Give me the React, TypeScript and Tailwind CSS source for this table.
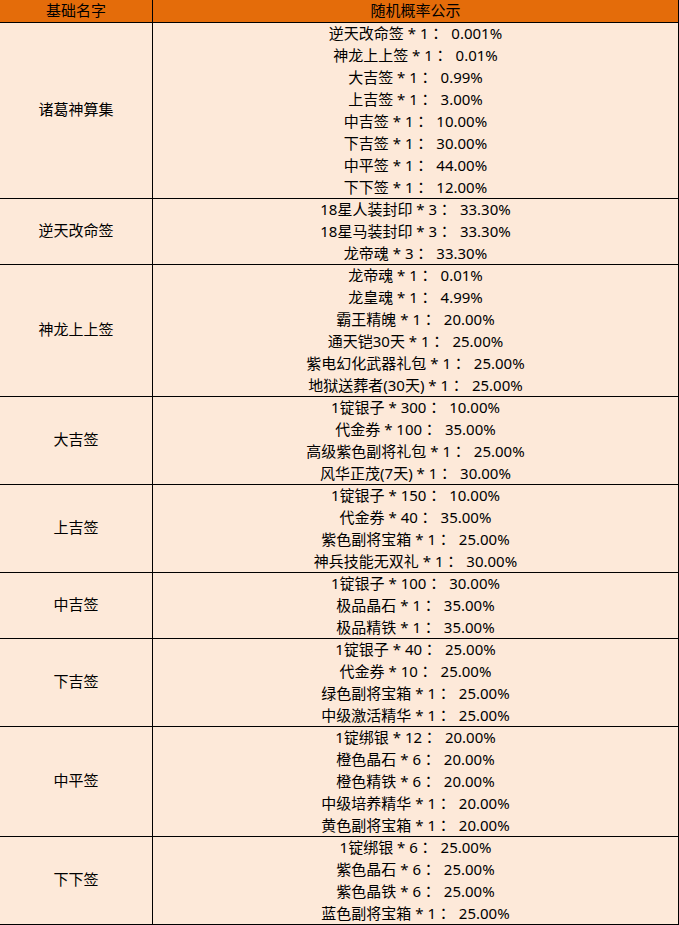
const groups: { name: string; items: string[] }[] = [
  {
    name: "诸葛神算集",
    items: [
      "逆天改命签 * 1： 0.001%",
      "神龙上上签 * 1： 0.01%",
      "大吉签 * 1： 0.99%",
      "上吉签 * 1： 3.00%",
      "中吉签 * 1： 10.00%",
      "下吉签 * 1： 30.00%",
      "中平签 * 1： 44.00%",
      "下下签 * 1： 12.00%",
    ],
  },
  {
    name: "逆天改命签",
    items: ["18星人装封印 * 3： 33.30%", "18星马装封印 * 3： 33.30%", "龙帝魂 * 3： 33.30%"],
  },
  {
    name: "神龙上上签",
    items: [
      "龙帝魂 * 1： 0.01%",
      "龙皇魂 * 1： 4.99%",
      "霸王精魄 * 1： 20.00%",
      "通天铠30天 * 1： 25.00%",
      "紫电幻化武器礼包 * 1： 25.00%",
      "地狱送葬者(30天) * 1： 25.00%",
    ],
  },
  {
    name: "大吉签",
    items: [
      "1锭银子 * 300： 10.00%",
      "代金券 * 100： 35.00%",
      "高级紫色副将礼包 * 1： 25.00%",
      "风华正茂(7天) * 1： 30.00%",
    ],
  },
  {
    name: "上吉签",
    items: [
      "1锭银子 * 150： 10.00%",
      "代金券 * 40： 35.00%",
      "紫色副将宝箱 * 1： 25.00%",
      "神兵技能无双礼 * 1： 30.00%",
    ],
  },
  {
    name: "中吉签",
    items: ["1锭银子 * 100： 30.00%", "极品晶石 * 1： 35.00%", "极品精铁 * 1： 35.00%"],
  },
  {
    name: "下吉签",
    items: [
      "1锭银子 * 40： 25.00%",
      "代金券 * 10： 25.00%",
      "绿色副将宝箱 * 1： 25.00%",
      "中级激活精华 * 1： 25.00%",
    ],
  },
  {
    name: "中平签",
    items: [
      "1锭绑银 * 12： 20.00%",
      "橙色晶石 * 6： 20.00%",
      "橙色精铁 * 6： 20.00%",
      "中级培养精华 * 1： 20.00%",
      "黄色副将宝箱 * 1： 20.00%",
    ],
  },
  {
    name: "下下签",
    items: [
      "1锭绑银 * 6： 25.00%",
      "紫色晶石 * 6： 25.00%",
      "紫色晶铁 * 6： 25.00%",
      "蓝色副将宝箱 * 1： 25.00%",
    ],
  },
];

// the full-width colon sits centred in the reference, as in the JP cut of Noto
const Line = ({ text }: { text: string }) => {
  const [left, right] = text.split("：");
  return (
    <div className="h-[22px] shrink-0 whitespace-pre text-center leading-[20px]">
      {left}
      <span className="font-['Noto_Sans_CJK_JP']">：</span>
      {" " + right}
    </div>
  );
};

export default function App() {
  return (
    <div
      className="w-[679px] border-r border-black text-[15px] text-black"
      style={{ fontFamily: '"Noto Sans", "Noto Sans CJK SC", sans-serif' }}
    >
      <div className="flex h-[23px] border-b border-black bg-[#e46c0a] leading-[21px]">
        <div className="w-[153px] shrink-0 border-r border-black text-center">基础名字</div>
        <div className="flex-1 text-center">随机概率公示</div>
      </div>
      {groups.map((group, index) => (
        <div
          key={index}
          className="flex border-b border-black bg-[#fde9d9]"
          style={{ height: group.items.length * 22 }}
        >
          <div className="flex w-[153px] shrink-0 items-center justify-center border-r border-black pb-[2px]">
            {group.name}
          </div>
          <div className="flex flex-1 flex-col">
            {group.items.map((item, i) => (
              <Line key={i} text={item} />
            ))}
          </div>
        </div>
      ))}
    </div>
  );
}
